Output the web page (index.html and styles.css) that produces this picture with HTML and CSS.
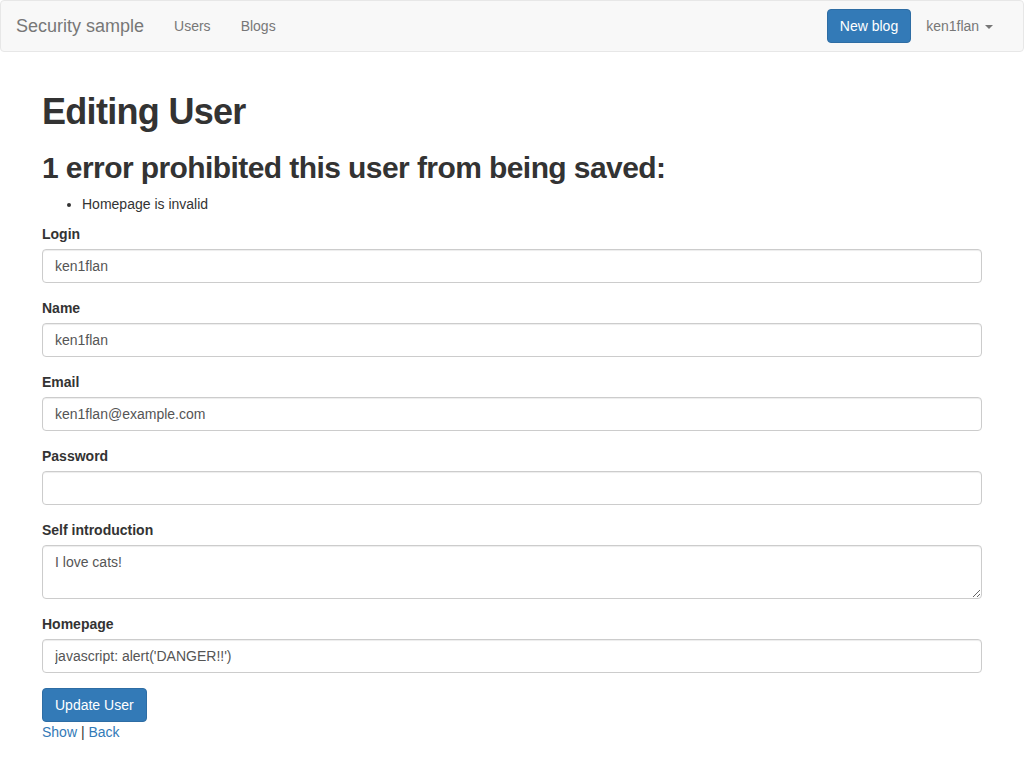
FILE: index.html
```html
<!DOCTYPE html>
<html>
<head>
<meta charset="utf-8">
<title>Security sample</title>
<link rel="stylesheet" href="styles.css">
</head>
<body>
<nav class="navbar">
  <div class="navbar-inner">
    <div class="nav-left">
      <a class="brand" href="#">Security sample</a>
      <ul class="nav">
        <li><a href="#">Users</a></li>
        <li><a href="#">Blogs</a></li>
      </ul>
    </div>
    <div class="nav-right">
      <a class="btn btn-primary navbar-btn" href="#">New blog</a>
      <ul class="nav">
        <li><a href="#" class="dropdown-toggle">ken1flan <span class="caret"></span></a></li>
      </ul>
    </div>
  </div>
</nav>
<main class="container">
  <h1>Editing User</h1>
  <div class="errors">
    <h2>1 error prohibited this user from being saved:</h2>
    <ul>
      <li>Homepage is invalid</li>
    </ul>
  </div>
  <form class="form">
    <div class="form-group">
      <label for="login">Login</label>
      <input id="login" class="form-control" type="text" value="ken1flan">
    </div>
    <div class="form-group">
      <label for="name">Name</label>
      <input id="name" class="form-control" type="text" value="ken1flan">
    </div>
    <div class="form-group">
      <label for="email">Email</label>
      <input id="email" class="form-control" type="text" value="ken1flan@example.com">
    </div>
    <div class="form-group">
      <label for="password">Password</label>
      <input id="password" class="form-control" type="password" value="">
    </div>
    <div class="form-group">
      <label for="intro">Self introduction</label>
      <textarea id="intro" class="form-control" rows="2">I love cats!</textarea>
    </div>
    <div class="form-group">
      <label for="homepage">Homepage</label>
      <input id="homepage" class="form-control" type="text" value="javascript: alert('DANGER!!')">
    </div>
    <div class="actions">
      <button type="button" class="btn btn-primary">Update User</button>
    </div>
  </form>
  <div class="links"><a href="#">Show</a> | <a href="#">Back</a></div>
</main>
</body>
</html>
```
FILE: styles.css
```css
* { box-sizing: border-box; }
html, body { margin: 0; padding: 0; }
body {
  font-family: "Liberation Sans", Arial, sans-serif;
  font-size: 14px;
  line-height: 1.42857143;
  color: #333;
  background: #fff;
}
a { color: #337ab7; text-decoration: none; }

.navbar {
  min-height: 50px;
  margin-bottom: 20px;
  background: #f8f8f8;
  border: 1px solid #e7e7e7;
  border-radius: 4px;
}
.navbar-inner {
  display: flex;
  justify-content: space-between;
  align-items: flex-start;
  padding: 0 15px;
  height: 50px;
}
.nav-left, .nav-right { display: flex; align-items: flex-start; }
.brand {
  display: block;
  height: 50px;
  padding: 15px;
  margin-left: -15px;
  font-size: 18px;
  line-height: 20px;
  color: #777;
}
.nav {
  list-style: none;
  margin: 0;
  padding: 0;
  display: flex;
}
.nav li a {
  display: block;
  padding: 15px;
  line-height: 20px;
  color: #777;
}
.caret {
  display: inline-block;
  width: 0;
  height: 0;
  margin-left: 2px;
  vertical-align: middle;
  border-top: 4px solid;
  border-right: 4px solid transparent;
  border-left: 4px solid transparent;
}

.btn {
  display: inline-block;
  padding: 6px 12px;
  font-family: inherit;
  font-size: 14px;
  line-height: 1.42857143;
  border: 1px solid transparent;
  border-radius: 4px;
  cursor: pointer;
  text-align: center;
}
.btn-primary {
  color: #fff;
  background: #337ab7;
  border-color: #2e6da4;
}
.navbar-btn { margin-top: 8px; margin-bottom: 8px; }

.container {
  width: 970px;
  margin: 0 auto;
  padding: 0 15px;
}
h1, h2 {
  font-family: inherit;
  font-weight: bold;
  line-height: 1.1;
  color: inherit;
  margin: 20px 0 10px;
}
h1 { font-size: 36px; margin-top: 40px; letter-spacing: -0.7px; }
h2 { font-size: 30px; margin-top: 19px; letter-spacing: -0.58px; }
.errors ul {
  margin: 0 0 10px;
  padding-left: 40px;
}

.form-group { margin-bottom: 15px; }
label {
  display: inline-block;
  max-width: 100%;
  margin-bottom: 5px;
  font-weight: bold;
}
.form-control {
  display: block;
  width: 100%;
  height: 34px;
  padding: 6px 12px;
  font-family: inherit;
  font-size: 14px;
  line-height: 1.42857143;
  color: #555;
  background: #fff;
  border: 1px solid #ccc;
  border-radius: 4px;
  box-shadow: inset 0 1px 1px rgba(0,0,0,.075);
  margin: 0;
}
textarea.form-control { height: auto; resize: vertical; }
.actions { margin: 0; }
.links { line-height: 20px; }
```
